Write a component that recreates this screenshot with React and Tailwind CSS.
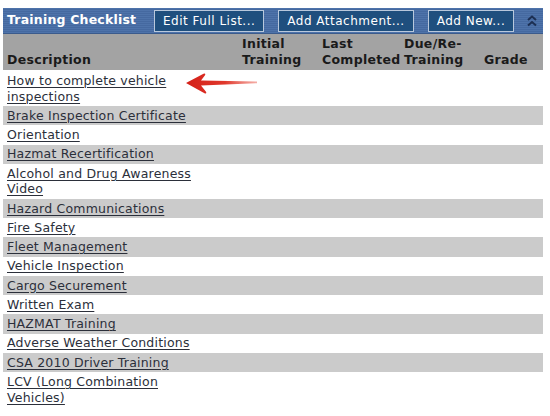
import React from "react";

const rows = [
  "How to complete vehicle inspections",
  "Brake Inspection Certificate",
  "Orientation",
  "Hazmat Recertification",
  "Alcohol and Drug Awareness Video",
  "Hazard Communications",
  "Fire Safety",
  "Fleet Management",
  "Vehicle Inspection",
  "Cargo Securement",
  "Written Exam",
  "HAZMAT Training",
  "Adverse Weather Conditions",
  "CSA 2010 Driver Training",
  "LCV (Long Combination Vehicles)",
];

function HeaderButton({ children }) {
  return (
    <button className="h-[22px] px-[8px] border border-[#b9c8dc] bg-[#1f4f7e] text-white text-[12px] leading-none tracking-[0.5px]">
      {children}
    </button>
  );
}

function RedArrow() {
  return (
    <svg width="74" height="24" viewBox="0 0 74 24" className="absolute left-[182px] top-[1px]">
      <defs>
        <linearGradient id="arr" x1="0" y1="0" x2="1" y2="0">
          <stop offset="0" stopColor="#d42018" />
          <stop offset="0.55" stopColor="#e0382c" />
          <stop offset="1" stopColor="#f08a80" stopOpacity="0.7" />
        </linearGradient>
      </defs>
      <path
        d="M1 11 L18.5 1.8 Q21 1 20 3.2 L16 8.6 L72 9.6 L72 11.2 L16 13.6 L21 19.8 Q22 22 19.5 21.2 Z"
        fill="url(#arr)"
      />
    </svg>
  );
}

export default function App() {
  return (
    <div className="w-[550px] h-[416px] bg-white overflow-hidden pt-[8px] pl-[3px] pr-[7px]" style={{ fontFamily: "'DejaVu Sans', Verdana, sans-serif" }}>
      {/* title bar */}
      <div className="h-[26px] flex items-center bg-[repeating-linear-gradient(to_bottom,#4e73aa_0px,#4e73aa_1px,#4569a0_1px,#4569a0_2px)] border-b border-[#3b5b8c]">
        <span className="pl-[4px] w-[151px] text-white font-bold text-[12.5px] tracking-[0.2px]">Training Checklist</span>
        <div className="flex gap-[14px]">
          <HeaderButton>Edit Full List...</HeaderButton>
          <HeaderButton>Add Attachment...</HeaderButton>
          <HeaderButton>Add New...</HeaderButton>
        </div>
        <svg width="12" height="14" viewBox="0 0 12 14" className="ml-auto mr-[5px]">
          <path d="M2 6 L6 2.5 L10 6 M2 11.5 L6 8 L10 11.5" stroke="#1c2f52" strokeWidth="2" fill="none" />
        </svg>
      </div>

      {/* column header */}
      <div className="h-[36px] grid grid-cols-[239px_80px_82px_80px_1fr] items-end bg-[#a3a3a3] text-[#1a1a1a] font-bold text-[12.5px] leading-[16px] pb-[2px] tracking-[0.3px]">
        <div className="pl-[4px]">Description</div>
        <div>Initial<br />Training</div>
        <div>Last<br />Completed</div>
        <div>Due/Re-<br />Training</div>
        <div>Grade</div>
      </div>

      {/* rows */}
      <div className="pt-[1px]">
        {rows.map((r, i) => (
          <div
            key={r}
            className={`relative grid grid-cols-[239px_1fr] py-[1.75px] text-[12.5px] leading-[15.75px] text-[#2b2f3a] tracking-[0.2px] ${i % 2 === 1 ? "bg-[#cbcbcb]" : "bg-white"}`}
          >
            <div className="pl-[4px] pr-[33px]">
              <span className="underline underline-offset-2 decoration-[1px]">{r}</span>
            </div>
            {i === 0 && <RedArrow />}
          </div>
        ))}
      </div>
    </div>
  );
}
